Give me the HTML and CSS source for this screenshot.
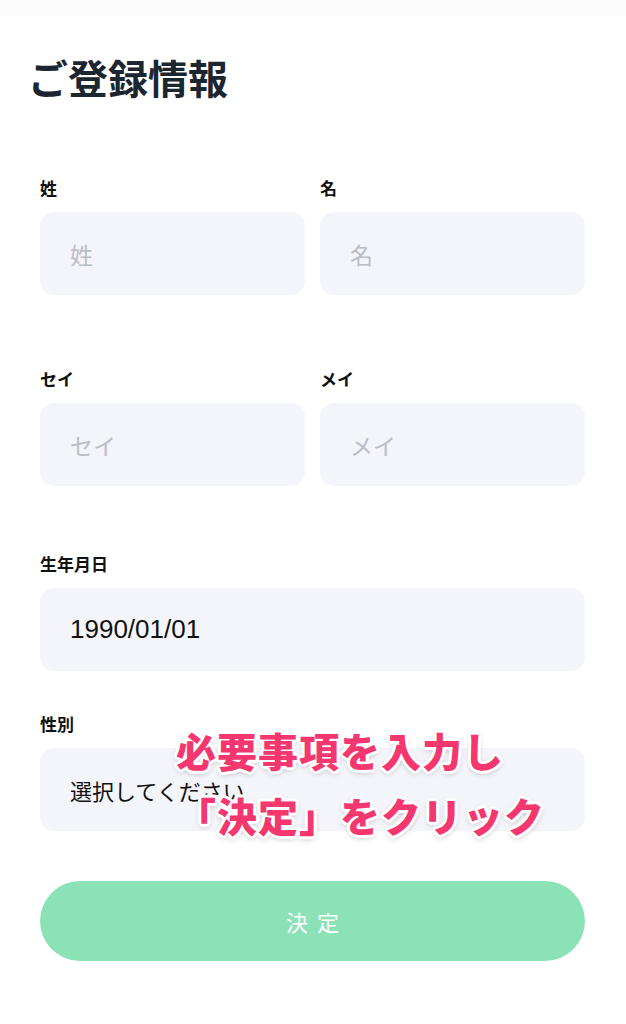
FILE: index.html
```html
<!DOCTYPE html>
<html lang="ja">
<head>
    <meta charset="UTF-8">
    <meta name="viewport" content="width=device-width, initial-scale=1.0">
    <title>ご登録情報</title>
    <link rel="stylesheet" href="styles.css">
</head>
<body>
    <div class="status-bar"></div>
    <main class="page">
        <h1 class="page-title">ご登録情報</h1>

        <form class="register-form">
            <!-- 氏名 -->
            <div class="field-row row-name">
                <div class="field">
                    <label class="field-label" for="lastName">姓</label>
                    <input class="field-input" id="lastName" type="text" placeholder="姓">
                </div>
                <div class="field">
                    <label class="field-label" for="firstName">名</label>
                    <input class="field-input" id="firstName" type="text" placeholder="名">
                </div>
            </div>

            <!-- フリガナ -->
            <div class="field-row row-kana">
                <div class="field">
                    <label class="field-label" for="lastKana">セイ</label>
                    <input class="field-input" id="lastKana" type="text" placeholder="セイ">
                </div>
                <div class="field">
                    <label class="field-label" for="firstKana">メイ</label>
                    <input class="field-input" id="firstKana" type="text" placeholder="メイ">
                </div>
            </div>

            <!-- 生年月日 -->
            <div class="field row-birth">
                <label class="field-label" for="birthday">生年月日</label>
                <input class="field-input field-date" id="birthday" type="text" value="1990/01/01">
            </div>

            <!-- 性別 -->
            <div class="field row-gender">
                <label class="field-label" for="gender">性別</label>
                <select class="field-input field-select" id="gender">
                    <option>選択してください</option>
                    <option>男性</option>
                    <option>女性</option>
                </select>
            </div>

            <button class="submit-btn" type="button">決定</button>

            <!-- 説明用の注釈 -->
            <p class="guide-note">必要事項を入力し<br>「決定」をクリック</p>
        </form>
    </main>
</body>
</html>
```

FILE: styles.css
```css
/* General styles */
body {
    margin: 0;
    padding: 0;
    background-color: #FFFFFF;
    font-family: "Noto Sans CJK JP", "Noto Sans", sans-serif;
    color: #111;
}

.status-bar {
    height: 16px;
    background-color: #FCFCFC;
}

/* Page */
.page {
    padding: 37px 28px 0;
}

.page-title {
    margin: 0;
    font-size: 40px;
    line-height: 48px;
    font-weight: 700;
    color: #1C2630;
}

/* Form */
.register-form {
    position: relative;
    padding: 0 13px 0 12px;
}

.field-row {
    display: grid;
    grid-template-columns: 1fr 1fr;
    gap: 15px;
}

.row-name {
    margin-top: 75px;
}

.row-kana {
    margin-top: 72px;
}

.row-birth {
    margin-top: 66px;
}

.row-gender {
    margin-top: 41px;
}

.field {
    display: flex;
    flex-direction: column;
}

.field-label {
    font-size: 17px;
    line-height: 24px;
    font-weight: 700;
    color: #111;
    margin-bottom: 12px;
}

.field-input {
    box-sizing: border-box;
    width: 100%;
    height: 83px;
    padding: 0 30px;
    border: none;
    border-radius: 14px;
    background-color: #F4F5FA;
    font-family: "Noto Sans CJK JP", sans-serif;
    font-size: 23px;
    color: #111;
    outline: none;
}

.field-input::placeholder {
    color: #B9BDC4;
}

.field-date {
    font-family: "Liberation Sans", "Noto Sans CJK JP", sans-serif;
    font-size: 26px;
}

.field-select {
    -webkit-appearance: none;
    appearance: none;
    font-size: 22px;
}

/* Submit button */
.submit-btn {
    display: block;
    width: 100%;
    height: 80px;
    margin-top: 50px;
    border: none;
    border-radius: 40px;
    background-color: #8CE2B7;
    color: #FFFFFF;
    font-family: "Noto Sans CJK JP", sans-serif;
    font-size: 22px;
    letter-spacing: 9px;
    text-indent: 9px;
}

/* Annotation over the form */
.guide-note {
    position: absolute;
    left: 148px;
    top: 542px;
    margin: 0;
    font-size: 40px;
    line-height: 65px;
    font-weight: 900;
    letter-spacing: 1px;
    color: #F5376F;
    text-shadow:
        -2px -2px 0 #FFF, 2px -2px 0 #FFF, -2px 2px 0 #FFF, 2px 2px 0 #FFF,
        0 -3px 0 #FFF, 0 3px 0 #FFF, -3px 0 0 #FFF, 3px 0 0 #FFF,
        0 2px 6px rgba(0, 0, 0, 0.35);
}
```
